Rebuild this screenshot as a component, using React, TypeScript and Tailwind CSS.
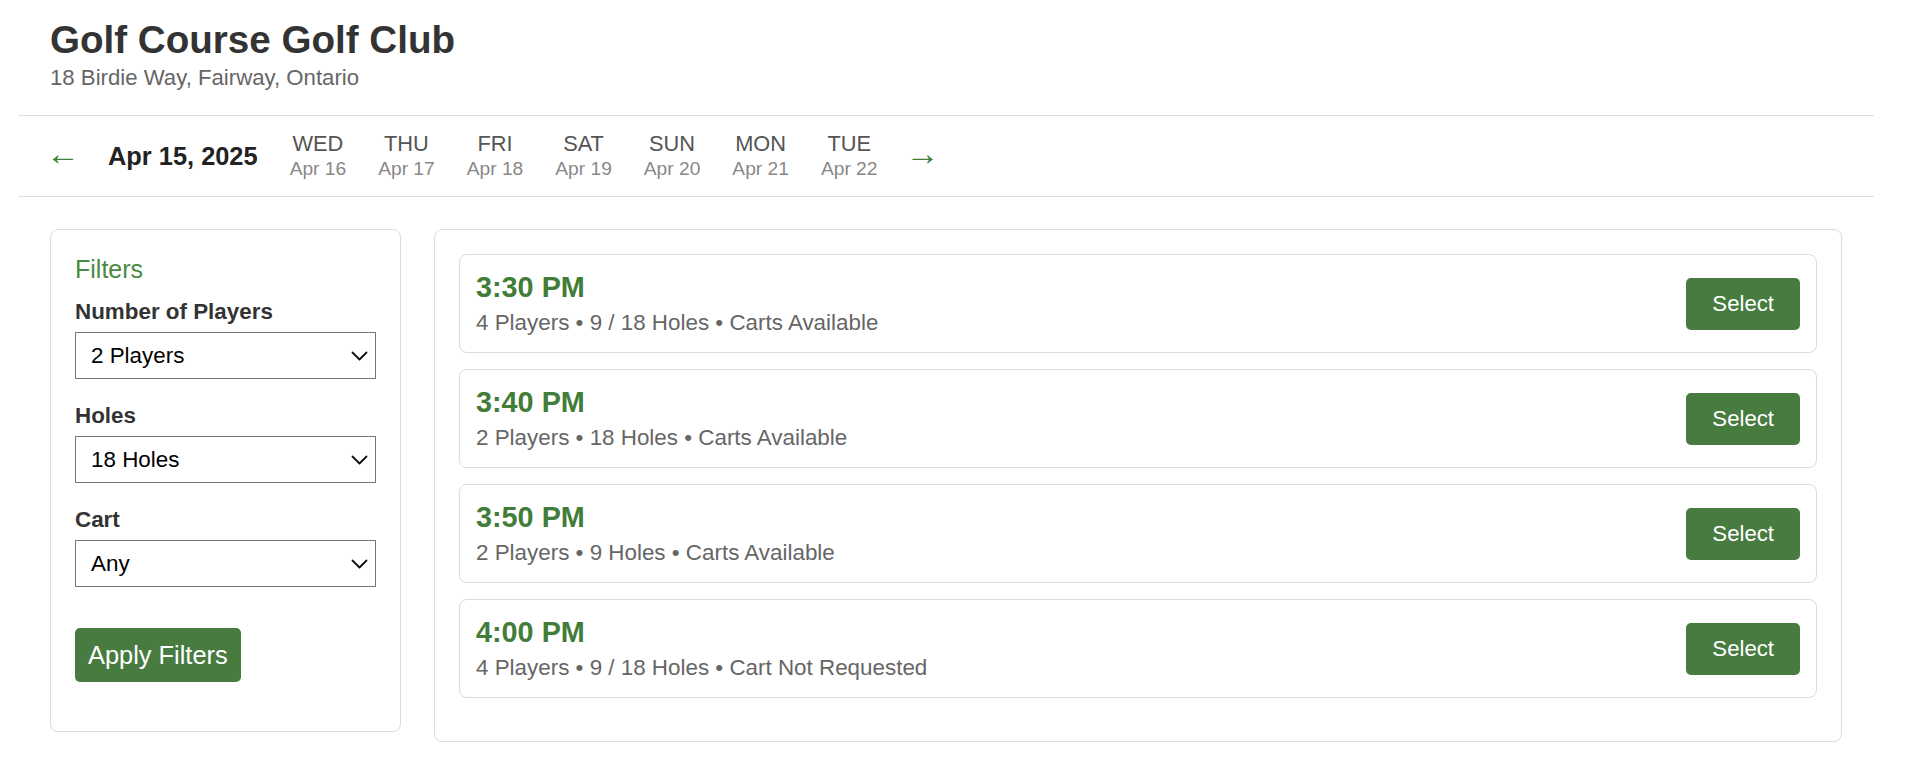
import React, { useState } from 'react';

interface TeeTime {
  time: string;
  players: string;
  holes: string;
  cart: string;
}

const days = [
  { dow: 'WED', date: 'Apr 16' },
  { dow: 'THU', date: 'Apr 17' },
  { dow: 'FRI', date: 'Apr 18' },
  { dow: 'SAT', date: 'Apr 19' },
  { dow: 'SUN', date: 'Apr 20' },
  { dow: 'MON', date: 'Apr 21' },
  { dow: 'TUE', date: 'Apr 22' },
];

const teeTimes: TeeTime[] = [
  { time: '3:30 PM', players: '4 Players', holes: '9 / 18 Holes', cart: 'Carts Available' },
  { time: '3:40 PM', players: '2 Players', holes: '18 Holes', cart: 'Carts Available' },
  { time: '3:50 PM', players: '2 Players', holes: '9 Holes', cart: 'Carts Available' },
  { time: '4:00 PM', players: '4 Players', holes: '9 / 18 Holes', cart: 'Cart Not Requested' },
];

const Chevron = () => (
  <svg
    className="pointer-events-none absolute right-[8px] top-1/2 h-[10px] w-[17px] -translate-y-1/2"
    viewBox="0 0 17 10"
    fill="none"
    stroke="#111"
    strokeWidth="1.8"
    strokeLinecap="round"
    strokeLinejoin="round"
  >
    <path d="M1.5 1.5 8.5 8.5 15.5 1.5" />
  </svg>
);

interface FieldProps {
  label: string;
  value: string;
  options: string[];
  onChange: (v: string) => void;
  first?: boolean;
}

const Field: React.FC<FieldProps> = ({ label, value, options, onChange, first }) => (
  <div className={first ? 'mt-[15px]' : 'mt-[24px]'}>
    <label className="mb-[7px] block text-[22.4px] font-bold leading-[26px] text-[#333]">{label}</label>
    <div className="relative">
      <select
        value={value}
        onChange={(e) => onChange(e.target.value)}
        className="h-[47px] w-full appearance-none rounded-none border border-[#767676] bg-white pl-[15px] text-[22.4px] text-black outline-none"
      >
        {options.map((o) => (
          <option key={o}>{o}</option>
        ))}
      </select>
      <Chevron />
    </div>
  </div>
);

export default function App() {
  const [players, setPlayers] = useState('2 Players');
  const [holes, setHoles] = useState('18 Holes');
  const [cart, setCart] = useState('Any');

  return (
    <div className="min-h-screen bg-white font-['Liberation_Sans',Arial,sans-serif]">
      <div className="ml-[18px] w-[1856px]">
        {/* Club header */}
        <header className="px-8 pb-[24px] pt-[17px]">
          <h1 className="text-[38.6px] font-bold leading-[46px] text-[#333]">Golf Course Golf Club</h1>
          <p className="mt-[2px] text-[22.2px] leading-[26px] text-[#666]">18 Birdie Way, Fairway, Ontario</p>
        </header>

        {/* Date strip */}
        <nav className="flex h-[82px] items-center gap-[32px] border-y border-[#dcdcdc] px-8">
          <button className="-ml-[4px] w-[30px] whitespace-nowrap pb-[6px] text-left text-[34px] leading-[30px] text-[#3f7f37]">
            ←
          </button>
          <span className="text-[25.4px] font-bold leading-[30px] text-[#222]">Apr 15, 2025</span>
          {days.map((d) => (
            <button key={d.dow} className="flex flex-col items-center">
              <span className="text-[21.8px] leading-[26px] text-[#555]">{d.dow}</span>
              <span className="text-[19.2px] leading-[24px] text-[#888]">{d.date}</span>
            </button>
          ))}
          <button className="-ml-[4px] w-[30px] whitespace-nowrap pb-[6px] text-left text-[34px] leading-[30px] text-[#3f7f37]">
            →
          </button>
        </nav>

        <main className="flex items-start gap-[33px] px-8 pt-[32px]">
          {/* Filters */}
          <aside className="w-[351px] rounded-lg border border-[#dcdcdc] px-6 pb-[49px] pt-6">
            <h2 className="text-[25px] leading-[30px] text-[#4a8a42]">Filters</h2>
            <Field
              first
              label="Number of Players"
              value={players}
              onChange={setPlayers}
              options={['1 Player', '2 Players', '3 Players', '4 Players']}
            />
            <Field label="Holes" value={holes} onChange={setHoles} options={['9 Holes', '18 Holes']} />
            <Field label="Cart" value={cart} onChange={setCart} options={['Any', 'Cart', 'Walking']} />
            <button className="mt-[41px] h-[54px] rounded-[5px] bg-[#477b3f] px-[13px] text-[25.4px] text-white">
              Apply Filters
            </button>
          </aside>

          {/* Tee times */}
          <section className="flex-1 rounded-lg border border-[#dcdcdc] px-6 pb-[27px] pt-6">
            {teeTimes.map((t) => (
              <div
                key={t.time}
                className="mb-4 flex items-center justify-between rounded-lg border border-[#dcdcdc] p-4"
              >
                <div>
                  <div className="text-[28.8px] font-bold leading-[32px] text-[#417d39]">{t.time}</div>
                  <div className="mt-[7px] text-[22.4px] leading-[26px] text-[#666]">
                    {t.players} • {t.holes} • {t.cart}
                  </div>
                </div>
                <button className="rounded-[5px] bg-[#477b3f] px-[26px] py-[13px] text-[22.2px] leading-[26px] text-white">
                  Select
                </button>
              </div>
            ))}
          </section>
        </main>
      </div>
    </div>
  );
}
